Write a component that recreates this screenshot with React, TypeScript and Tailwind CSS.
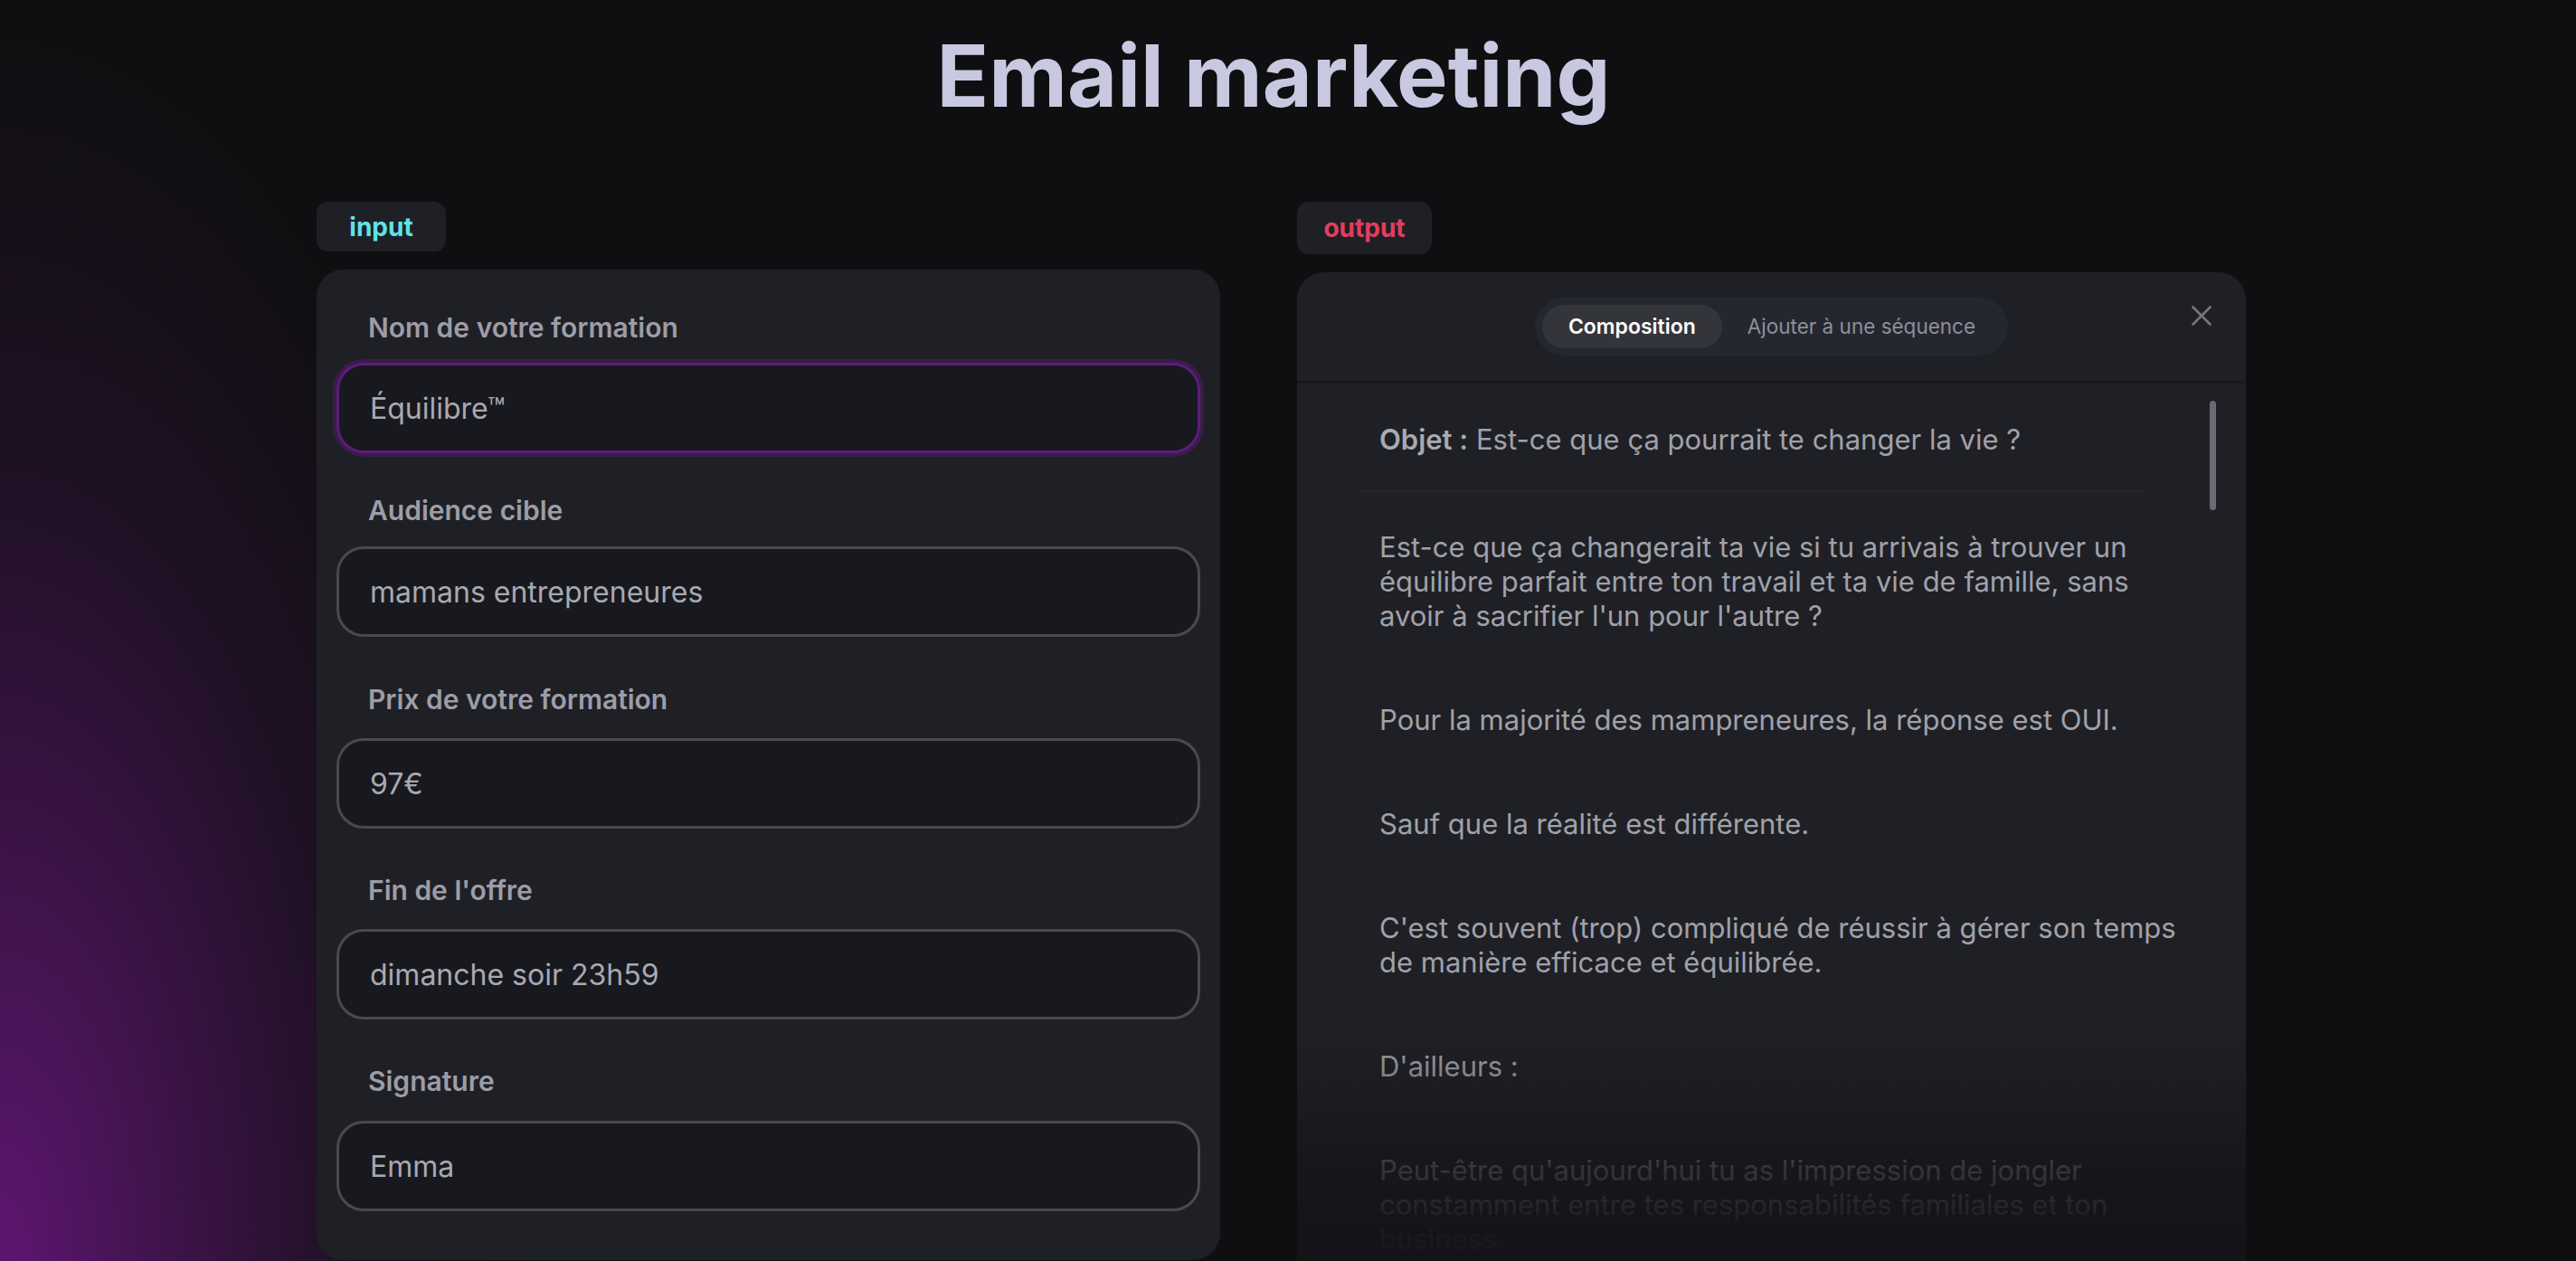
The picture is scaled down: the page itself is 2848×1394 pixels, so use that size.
import { useState } from "react";

type Field = { label: string; value: string; gap: string; fieldGap: string };

const fields: Field[] = [
  { label: "Nom de votre formation", value: "Équilibre™", gap: "mt-0", fieldGap: "mt-[21px]" },
  { label: "Audience cible", value: "mamans entrepreneures", gap: "mt-[46px]", fieldGap: "mt-[22px]" },
  { label: "Prix de votre formation", value: "97€", gap: "mt-[52px]", fieldGap: "mt-[25px]" },
  { label: "Fin de l'offre", value: "dimanche soir 23h59", gap: "mt-[51px]", fieldGap: "mt-[25px]" },
  { label: "Signature", value: "Emma", gap: "mt-[51px]", fieldGap: "mt-[26px]" },
];

// lines kept as in the composed email preview
const paragraphs: string[][] = [
  [
    "Est-ce que ça changerait ta vie si tu arrivais à trouver un",
    "équilibre parfait entre ton travail et ta vie de famille, sans",
    "avoir à sacrifier l'un pour l'autre ?",
  ],
  ["Pour la majorité des mampreneures, la réponse est OUI."],
  ["Sauf que la réalité est différente."],
  [
    "C'est souvent (trop) compliqué de réussir à gérer son temps",
    "de manière efficace et équilibrée.",
  ],
  ["D'ailleurs :"],
  [
    "Peut-être qu'aujourd'hui tu as l'impression de jongler",
    "constamment entre tes responsabilités familiales et ton",
    "business.",
  ],
  [
    "Tu cours après le temps, tu culpabilises de ne pas en faire",
    "assez, et tu te demandes comment font les autres.",
  ],
];

function InputPanel() {
  return (
    <div className="flex w-[999px] flex-col">
      <div className="flex h-[55px] w-[143px] items-center justify-center rounded-[13px] bg-[#1f2025]">
        <span className="text-[28px] font-bold text-[#5ee3e8]">input</span>
      </div>
      <div className="mt-[20px] flex flex-col rounded-[30px] bg-[#1f2025] px-[22px] pt-[47px] pb-[54px]">
        {fields.map((f, i) => (
          <div key={f.label} className={`flex flex-col ${f.gap}`}>
            <label className="ml-[35px] text-[30px] leading-[35px] font-semibold text-[#9d9da7]">
              {f.label}
            </label>
            <input
              readOnly
              defaultValue={f.value}
              className={
                i === 0
                  ? `${f.fieldGap} h-[100px] w-full rounded-[30px] border-[3px] border-[#5d1b7c] bg-[#18191e] pl-[34px] text-[32px] text-[#a9a9b2] shadow-[0_0_0_4px_rgba(93,27,124,0.42)] outline-none`
                  : `${f.fieldGap} h-[100px] w-full rounded-[30px] border-[3px] border-[#4a4a4e] bg-[#18191e] pl-[34px] text-[32px] text-[#a9a9b2] outline-none`
              }
            />
          </div>
        ))}
      </div>
    </div>
  );
}

function OutputPanel() {
  const [tab, setTab] = useState("composition");

  return (
    <div className="flex w-[1049px] flex-col">
      <div className="flex h-[58px] w-[149px] items-center justify-center rounded-[13px] bg-[#1f2025]">
        <span className="text-[28px] font-bold text-[#e23e5f]">output</span>
      </div>
      <div className="mt-[20px] flex h-[1093px] flex-col overflow-hidden rounded-t-[30px] bg-[#1f2025]">
        {/* header */}
        <div className="grid h-[123px] shrink-0 grid-cols-[1fr_auto_1fr] border-b-[3px] border-[#17181c]">
          <div />
          <div className="flex items-center self-center rounded-full bg-[#252730] p-[8px]">
            <button
              type="button"
              onClick={() => setTab("composition")}
              className={
                tab === "composition"
                  ? "h-[48px] rounded-full bg-[#34353b] px-[29px] text-[23px] font-semibold text-white"
                  : "h-[48px] rounded-full px-[29px] text-[22.5px] text-[#8e8f99]"
              }
            >
              Composition
            </button>
            <button
              type="button"
              onClick={() => setTab("sequence")}
              className={
                tab === "sequence"
                  ? "h-[48px] rounded-full bg-[#34353b] px-[28px] text-[23px] font-semibold text-white"
                  : "h-[48px] rounded-full px-[28px] text-[22.5px] text-[#8e8f99]"
              }
            >
              Ajouter à une séquence
            </button>
          </div>
          <button
            type="button"
            className="mt-[37px] mr-[38px] self-start justify-self-end text-[#76767e]"
          >
            <svg width="22" height="22" viewBox="0 0 22 22" fill="none">
              <path
                d="M1.5 1.5L20.5 20.5M20.5 1.5L1.5 20.5"
                stroke="currentColor"
                strokeWidth="2.6"
                strokeLinecap="round"
              />
            </svg>
          </button>
        </div>

        {/* body */}
        <div className="relative flex-1 overflow-hidden pt-[43px] pl-[70px] text-[31px] leading-[38px] text-[#a1a1aa]">
          <p className="pb-[37px] pl-[21px]">
            <span className="font-semibold text-[#a9a9b1]">Objet :</span> Est-ce que
            ça pourrait te changer la vie ?
          </p>
          <div className="h-px w-[869px] bg-[#292a2f]" />
          <div className="flex flex-col gap-[77px] pt-[43px] pl-[21px]">
            {paragraphs.map((lines) => (
              <p key={lines[0]}>
                {lines.map((l) => (
                  <span key={l} className="block whitespace-nowrap">
                    {l}
                  </span>
                ))}
              </p>
            ))}
          </div>

          <div className="absolute top-[19px] right-[33px] h-[121px] w-[7px] rounded-full bg-[#696a72]" />
          <div className="pointer-events-none absolute inset-x-0 bottom-0 h-[280px] bg-[linear-gradient(to_bottom,rgba(20,20,24,0)_8%,rgba(20,20,24,0.16)_22%,rgba(20,20,24,0.76)_63%,rgba(20,20,24,0.95)_88%,rgba(20,20,24,0.98)_100%)]" />
        </div>
      </div>
    </div>
  );
}

export default function App() {
  return (
    <div className="h-screen w-full overflow-hidden bg-[#0f0f11] bg-[image:radial-gradient(ellipse_600px_1350px_at_0%_100%,#5e1670_0%,rgba(94,22,112,0.55)_35%,rgba(94,22,112,0.2)_65%,rgba(94,22,112,0)_100%)] font-['Inter',sans-serif]">
      <h1 className="pt-[36px] pr-[32px] text-center text-[95px] leading-none font-bold text-[#c8c9e0]">
        Email marketing
      </h1>
      <div className="mt-[92px] flex gap-[85px] pl-[350px]">
        <InputPanel />
        <OutputPanel />
      </div>
    </div>
  );
}
